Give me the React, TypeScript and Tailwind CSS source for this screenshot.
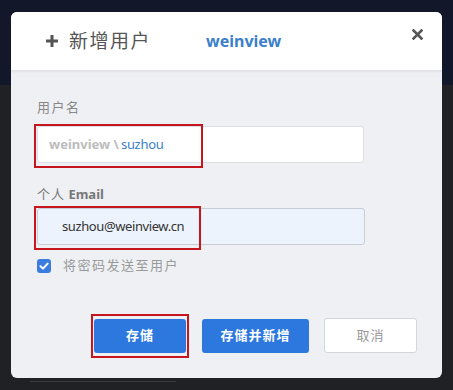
import React from "react";

export default function App() {
  const font = { fontFamily: '"Noto Sans", "Noto Sans CJK SC", sans-serif' };
  return (
    <div className="relative w-[453px] h-[390px] overflow-hidden bg-[#202124]" style={font}>
      <div className="h-[85px] bg-[#121829]" />
      <div className="absolute left-[30px] top-[381px] w-[146px] h-[1px] bg-[#3a3b3f]" />
      <div className="absolute left-[11px] top-[12px] w-[431px] h-[366px] rounded-[6px] bg-[#eef0f4] overflow-hidden flex flex-col">
        <div className="h-[59px] bg-white border-b border-[#e2e4e8] shadow-[0_1px_2px_rgba(0,0,0,0.06)] flex items-center relative">
          <svg className="ml-[35px]" width="12" height="12" viewBox="0 0 12 12">
            <rect x="4.5" y="0" width="3" height="12" fill="#555" />
            <rect x="0" y="4.5" width="12" height="3" fill="#555" />
          </svg>
          <span className="ml-[11px] text-[19px] text-[#555] leading-none tracking-[1.5px]">新增用户</span>
          <span className="ml-[55px] text-[16px] font-bold text-[#3c7fca] leading-none">weinview</span>
          <svg className="absolute left-[401px] top-[17px]" width="11" height="11" viewBox="0 0 11 11">
            <path d="M1.5 1.5 L9.5 9.5 M9.5 1.5 L1.5 9.5" stroke="#555" strokeWidth="2.6" strokeLinecap="square" />
          </svg>
        </div>
        <div className="flex flex-col pl-[26px]">
          <div className="mt-[27px] h-[18px] text-[13px] leading-[18px] text-[#888] tracking-[1.5px]">用户名</div>
          <div className="relative mt-[10px] w-[327px] h-[37px] bg-white border border-[#dcdee2] rounded-[3px] flex items-center pl-[11px] text-[13px]">
            <span className="font-bold text-[#bcbcbc]">weinview \</span>
            <span className="ml-[2px] text-[#3c7fca] tracking-[-0.3px]">suzhou</span>
            <div className="absolute left-[-4px] top-[-3px] w-[169px] h-[44px] border-2 border-[#c4161c]" />
          </div>
          <div className="mt-[22px] h-[18px] text-[13px] leading-[18px] text-[#777]">
            <span className="tracking-[1px]">个人</span> <span className="font-bold">Email</span>
          </div>
          <div className="relative mt-[5px] w-[328px] h-[37px] bg-[#edf3fd] border border-[#c9cdd5] rounded-[3px] flex items-center pl-[24px] text-[13px] tracking-[-0.4px] text-[#333]">
            suzhou@weinview.cn
            <div className="absolute left-[-4px] top-[-3px] w-[167px] h-[44px] border-2 border-[#c4161c]" />
          </div>
          <div className="mt-[13px] h-[16px] flex items-center">
            <div className="w-[14px] h-[14px] rounded-[3px] bg-[#3a7ddf] flex items-center justify-center">
              <svg width="10" height="10" viewBox="0 0 10 10">
                <path d="M1.5 5.2 L4 7.6 L8.6 2.6" stroke="#fff" strokeWidth="2" fill="none" strokeLinecap="round" strokeLinejoin="round" />
              </svg>
            </div>
            <span className="ml-[12px] text-[13px] text-[#9a9a9a] tracking-[1.5px]">将密码发送至用户</span>
          </div>
          <div className="mt-[44px] flex items-center">
            <div className="relative ml-[57px] w-[92px] h-[34px] rounded-[3px] bg-[#2c78de] text-white text-[13px] font-bold flex items-center justify-center tracking-[1px]">
              存储
              <div className="absolute left-[-3px] top-[-5px] w-[98px] h-[44px] border-2 border-[#c4161c]" />
            </div>
            <div className="ml-[16px] w-[107px] h-[34px] rounded-[3px] bg-[#2c78de] text-white text-[13px] font-bold flex items-center justify-center tracking-[1px]">
              存储并新增
            </div>
            <div className="ml-[15px] w-[93px] h-[35px] rounded-[3px] bg-white border border-[#d4d6da] text-[#999] text-[13px] flex items-center justify-center tracking-[1px]">
              取消
            </div>
          </div>
        </div>
      </div>
    </div>
  );
}
